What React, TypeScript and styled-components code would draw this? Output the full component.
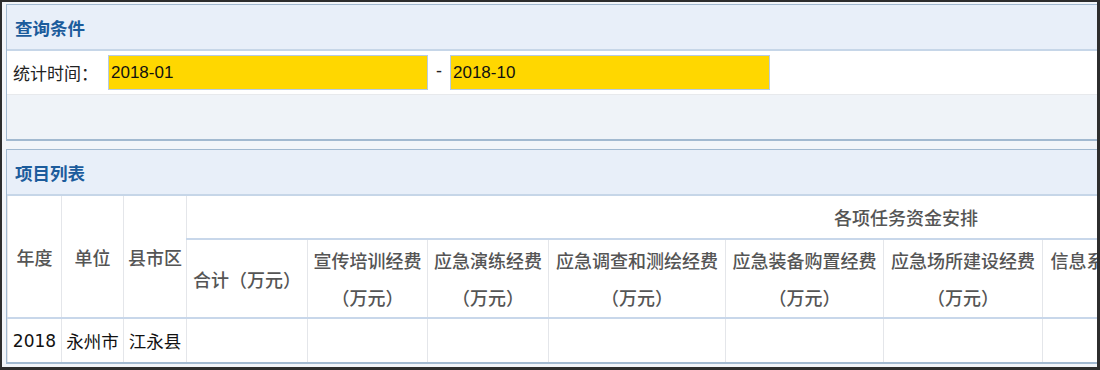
import React from "react";
import styled, { createGlobalStyle } from "styled-components";

const GlobalStyle = createGlobalStyle`
  html, body {
    margin: 0;
    padding: 0;
    background: #ffffff;
  }
  body {
    font-family: "Liberation Sans", "Noto Sans CJK SC", sans-serif;
  }
`;

const Frame = styled.div`
  width: 1100px;
  height: 370px;
  box-sizing: border-box;
  border-style: solid;
  border-color: #2d2d2d;
  border-width: 2px 3px 3px 2px;
  background: #f2f5f9;
  overflow: hidden;
  padding: 2px 0 0 4px;
  display: flex;
  flex-direction: column;
  gap: 8px;
`;

const Panel = styled.section`
  width: 1620px;
  flex-shrink: 0;
  box-sizing: border-box;
  border: 1px solid #a2b9d0;
  border-bottom-width: 2px;
  background: #ffffff;
`;

const PanelHead = styled.div`
  height: 44px;
  display: flex;
  align-items: center;
  padding-left: 8px;
  background: #e8eff9;
  border-bottom: 2px solid #c6d6e8;
  font-family: "Noto Sans CJK SC", sans-serif;
  font-size: 17.5px;
  font-weight: 700;
  color: #1c5c9c;
`;

const FilterRow = styled.div`
  height: 43px;
  display: flex;
  align-items: center;
  padding-left: 6px;
  background: #ffffff;
  border-bottom: 1px solid #e7e9ec;
`;

const FilterLabel = styled.span`
  width: 95px;
  font-family: "Noto Sans CJK SC", sans-serif;
  font-size: 17px;
  color: #222;
`;

const DateInput = styled.input`
  width: 320px;
  height: 35px;
  box-sizing: border-box;
  border: 1px solid #b6cbe4;
  background: #ffd700;
  padding: 0 2px;
  font-family: "Liberation Sans", sans-serif;
  font-size: 17px;
  color: #111;
  outline: none;
`;

const Dash = styled.span`
  width: 22px;
  text-align: center;
  font-family: "Liberation Sans", sans-serif;
  font-size: 18px;
  color: #222;
  margin-top: -3px;
`;

const FilterFoot = styled.div`
  height: 44px;
  background: #eff3f8;
`;

const Table = styled.table`
  border-collapse: collapse;
  table-layout: fixed;
  width: 1618px;
`;

const Th = styled.th<{ $underline?: boolean }>`
  font-family: "Noto Sans CJK SC", sans-serif;
  font-size: 18px;
  font-weight: 500;
  color: #555;
  text-align: center;
  vertical-align: middle;
  padding: 0;
  border-left: 1px solid #e4e6ea;
  border-right: 1px solid #e4e6ea;
  border-bottom: ${(p) => (p.$underline ? "2px solid #c8d7ea" : "none")};
  white-space: nowrap;
`;

const HeadLine = styled.div`
  line-height: 37px;
`;

const Td = styled.td<{ $mono?: boolean }>`
  height: 43px;
  padding: 0;
  text-align: center;
  font-family: ${(p) =>
    p.$mono ? '"DejaVu Sans", sans-serif' : '"Noto Sans CJK SC", sans-serif'};
  font-size: ${(p) => (p.$mono ? "17px" : "17.5px")};
  color: #111;
  border-left: 1px solid #e4e6ea;
  border-right: 1px solid #e4e6ea;
  border-top: 2px solid #c8d7ea;
`;

const columns = [54, 62, 63, 121, 120, 121, 177, 158, 159, 160, 160, 263];

const costItems = [
  "宣传培训经费",
  "应急演练经费",
  "应急调查和测绘经费",
  "应急装备购置经费",
  "应急场所建设经费",
  "信息系统建设经费",
  "应急物资储备经费",
  "其他经费",
];

export default function App() {
  return (
    <>
      <GlobalStyle />
      <Frame>
        <Panel>
          <PanelHead>查询条件</PanelHead>
          <FilterRow>
            <FilterLabel>统计时间：</FilterLabel>
            <DateInput defaultValue="2018-01" />
            <Dash>-</Dash>
            <DateInput defaultValue="2018-10" />
          </FilterRow>
          <FilterFoot />
        </Panel>
        <Panel>
          <PanelHead>项目列表</PanelHead>
          <Table>
            <colgroup>
              {columns.map((w, i) => (
                <col key={i} style={{ width: w }} />
              ))}
            </colgroup>
            <thead>
              <tr style={{ height: 43 }}>
                <Th rowSpan={2}>年度</Th>
                <Th rowSpan={2}>单位</Th>
                <Th rowSpan={2}>县市区</Th>
                <Th colSpan={9} $underline>
                  各项任务资金安排
                </Th>
              </tr>
              <tr style={{ height: 79 }}>
                <Th>合计（万元）</Th>
                {costItems.map((name) => (
                  <Th key={name}>
                    <HeadLine>{name}</HeadLine>
                    <HeadLine>（万元）</HeadLine>
                  </Th>
                ))}
              </tr>
            </thead>
            <tbody>
              <tr>
                <Td $mono>2018</Td>
                <Td>永州市</Td>
                <Td>江永县</Td>
                <Td />
                {costItems.map((name) => (
                  <Td key={name} />
                ))}
              </tr>
            </tbody>
          </Table>
        </Panel>
      </Frame>
    </>
  );
}
